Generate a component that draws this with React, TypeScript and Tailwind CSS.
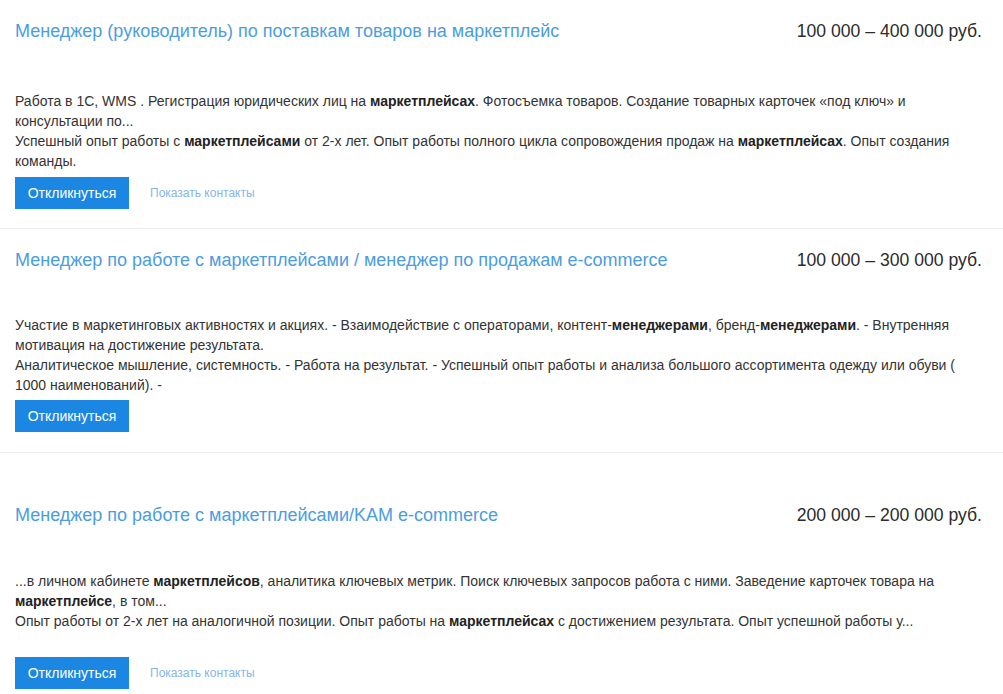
import React from "react";

type Vacancy = {
  title: string;
  salary: string;
  body: React.ReactNode;
  showContacts: boolean;
  wrap: string;
  head: string;
  btn: string;
};

const B = ({ children }: { children: React.ReactNode }) => (
  <b className="font-bold text-[#222]">{children}</b>
);

const vacancies: Vacancy[] = [
  {
    title: "Менеджер (руководитель) по поставкам товаров на маркетплейс",
    salary: "100 000 – 400 000 руб.",
    showContacts: true,
    wrap: "pt-[19px] pb-[19px] border-b border-[#ececec]",
    head: "mb-[48px]",
    btn: "mt-[6px]",
    body: (
      <>
        Работа в 1С, WMS . Регистрация юридических лиц на <B>маркетплейсах</B>.
        Фотосъемка товаров. Создание товарных карточек «под ключ» и
        консультации по...
        <br />
        Успешный опыт работы с <B>маркетплейсами</B> от 2-х лет. Опыт работы
        полного цикла сопровождения продаж на <B>маркетплейсах</B>. Опыт
        создания команды.
      </>
    ),
  },
  {
    title: "Менеджер по работе с маркетплейсами / менеджер по продажам e-commerce",
    salary: "100 000 – 300 000 руб.",
    showContacts: false,
    wrap: "pt-[19px] pb-[20px] border-b border-[#ececec]",
    head: "mb-[43px]",
    btn: "mt-[5px]",
    body: (
      <>
        Участие в маркетинговых активностях и акциях. - Взаимодействие с
        операторами, контент-<B>менеджерами</B>, бренд-<B>менеджерами</B>. -
        Внутренняя мотивация на достижение результата.
        <br />
        Аналитическое мышление, системность. - Работа на результат. - Успешный
        опыт работы и анализа большого ассортимента одежду или обуви ( 1000
        наименований). -
      </>
    ),
  },
  {
    title: "Менеджер по работе с маркетплейсами/KAM e-commerce",
    salary: "200 000 – 200 000 руб.",
    showContacts: true,
    wrap: "pt-[50px] pb-[10px]",
    head: "mb-[44px]",
    btn: "mt-[26px]",
    body: (
      <>
        ...в личном кабинете <B>маркетплейсов</B>, аналитика ключевых метрик.
        Поиск ключевых запросов работа с ними. Заведение карточек товара на{" "}
        <B>маркетплейсе</B>, в том...
        <br />
        Опыт работы от 2-х лет на аналогичной позиции. Опыт работы на{" "}
        <B>маркетплейсах</B> с достижением результата. Опыт успешной работы у...
      </>
    ),
  },
];

const VacancyCard = ({ v }: { v: Vacancy }) => (
  <div className={v.wrap}>
    <div className="pl-[15px] pr-[21px]">
      <div className={"flex items-start justify-between gap-6 " + v.head}>
        <a className="text-[18px] leading-[24px] text-[#4b9de0] cursor-pointer">
          {v.title}
        </a>
        <div className="text-[17.6px] leading-[24px] text-[#2b2b2b] whitespace-nowrap">
          {v.salary}
        </div>
      </div>
      <div className="text-[14px] leading-[20px] text-[#333]">{v.body}</div>
      <div className={"flex items-center " + v.btn}>
        <button className="w-[114px] h-[32px] bg-[#1b87e3] text-white text-[14px] leading-none">
          Откликнуться
        </button>
        {v.showContacts && (
          <a className="ml-[21px] text-[12px] text-[#86b4ea] cursor-pointer">
            Показать контакты
          </a>
        )}
      </div>
    </div>
  </div>
);

export default function App() {
  return (
    <div className="w-[1003px] min-h-[694px] bg-white font-['Liberation_Sans',Arial,sans-serif]">
      {vacancies.map((v) => (
        <VacancyCard key={v.title} v={v} />
      ))}
    </div>
  );
}
